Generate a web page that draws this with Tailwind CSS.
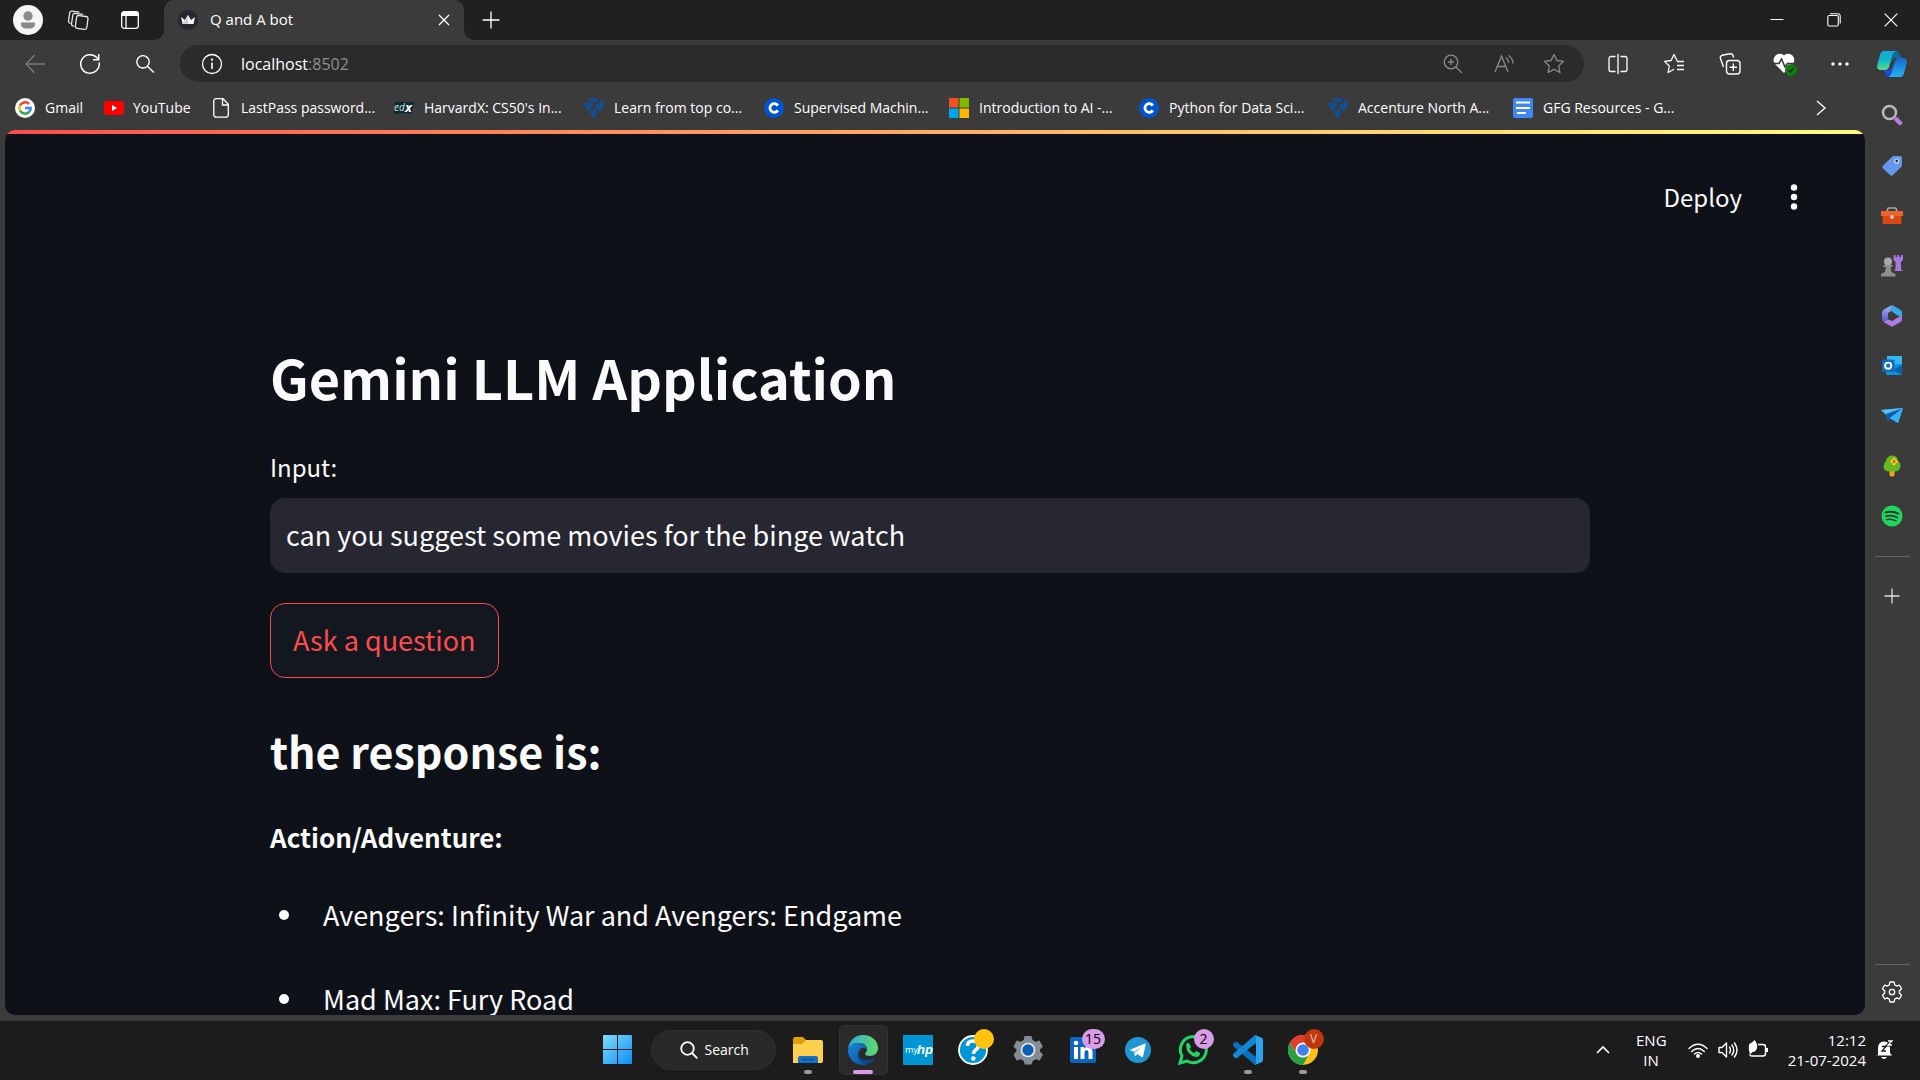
<!DOCTYPE html>
<html lang="en">
<head>
<meta charset="utf-8">
<title>Q and A bot</title>
<script src="https://cdn.jsdelivr.net/npm/@tailwindcss/browser@4"></script>
</head>
<body class="flex h-screen flex-col overflow-hidden bg-[#3b3b3b] font-['Open_Sans','Noto_Sans',sans-serif] text-sm text-white">

<!-- Shared symbols -->
<svg class="hidden" aria-hidden="true">
  <symbol id="coursera" viewBox="0 0 20 20"><circle cx="10" cy="10" r="10" fill="#0056d2"/><path d="M13.8 7.6A4.3 4.3 0 1 0 13.8 12.4" fill="none" stroke="#fff" stroke-width="2.8"/></symbol>
  <symbol id="forage" viewBox="0 0 20 20"><path d="M4 0h12l-3 3.500-5 1zM0 5l7-1 2.500 3-4 5-4-1zM11.500 6.500 20 2l.3 5-4.300 6-4.500-2.500zM5.500 13.500l3.500-3 4.500 3-2 6.500H9z" fill="#144e90"/></symbol>
</svg>

<!-- Tab strip -->
<header class="flex h-10 shrink-0 items-stretch bg-[#202020]">
  <div class="flex w-[154px] shrink-0 items-center">
    <button class="flex w-[56px] justify-center" aria-label="Profile">
      <svg class="size-[30px]" viewBox="0 0 30 30"><circle cx="15" cy="15" r="15" fill="#f5f5f5"/><circle cx="15" cy="11" r="4.7" fill="#8a8a8a"/><path d="M8 17.500h14v1.500a5 5 0 0 1-5 4.500h-4a5 5 0 0 1-5-4.500z" fill="#8a8a8a"/></svg>
    </button>
    <button class="flex w-[44px] justify-center" aria-label="Workspaces">
      <svg class="size-[22px]" viewBox="0 0 22 22" fill="none" stroke="#e8e8e8" stroke-width="1.300" stroke-linejoin="round"><rect x="9" y="7" width="11.500" height="13" rx="2.200" transform="rotate(8 15 13)"/><path d="M7 17.500 5.800 17a2 2 0 0 1-1.300-2L5.800 6a2 2 0 0 1 2.200-1.700l8 1.100M3.500 14.500l-1.200-.8a2 2 0 0 1-.8-2L2.700 4A2 2 0 0 1 5 2.200l7.500 1"/></svg>
    </button>
    <button class="flex w-[54px] justify-center pl-[6px]" aria-label="Tab actions">
      <svg class="size-5" viewBox="0 0 20 20"><rect x="1.700" y="1.700" width="16.600" height="16.600" rx="2.500" fill="none" stroke="#fff" stroke-width="1.300"/><path d="M1.500 3.500a2 2 0 0 1 2-2h13a2 2 0 0 1 2 2V6h-17z" fill="#fff"/><path d="M6 6v12" stroke="#fff" stroke-width="1.300"/></svg>
    </button>
  </div>
  <div class="w-[10px] shrink-0 bg-[#3b3b3b]"><div class="h-full rounded-br-[10px] bg-[#202020]"></div></div>
  <div class="flex w-[300px] items-center rounded-t-[10px] bg-[#3b3b3b] pr-[10px] pl-[14px]">
    <svg class="size-5 shrink-0" viewBox="0 0 20 20"><circle cx="10" cy="10" r="10" fill="#262730"/><path d="M3 7l4 3 3-5 3 5 4-3-1.500 7h-11z" fill="#f4f4f4"/><path d="M4.500 14 10 5v9z" fill="#cfcfcf"/></svg>
    <span class="ml-3 flex-1 text-[15px]">Q and A bot</span>
    <button class="flex size-5 items-center justify-center" aria-label="Close tab">
      <svg class="size-3" viewBox="0 0 12 12" stroke="#fff" stroke-width="1.300"><path d="M1 1l10 10M11 1 1 11"/></svg>
    </button>
  </div>
  <div class="flex-1 bg-[#3b3b3b]"><div class="flex h-full items-center justify-between rounded-bl-[10px] bg-[#202020]">
    <button class="flex w-[54px] justify-center" aria-label="New tab">
      <svg class="size-[18px]" viewBox="0 0 18 18" stroke="#fff" stroke-width="1.300"><path d="M9 .5v17M.5 9h17"/></svg>
    </button>
    <div class="flex">
      <button class="flex h-10 w-[57px] items-center justify-center" aria-label="Minimize"><svg class="size-[14px]" viewBox="0 0 14 14" stroke="#fff"><path d="M.5 6.500h13"/></svg></button>
      <button class="flex h-10 w-[57px] items-center justify-center" aria-label="Restore"><svg class="size-[14px]" viewBox="0 0 14 14" fill="none" stroke="#fff" stroke-width="1.100"><rect x=".8" y="2.500" width="10.500" height="10.500" rx="1.500"/><path d="M3 .8h8a2.200 2.200 0 0 1 2.200 2.200v7.500"/></svg></button>
      <button class="flex h-10 w-[58px] items-center justify-center" aria-label="Close"><svg class="size-[14px]" viewBox="0 0 14 14" stroke="#fff" stroke-width="1.200"><path d="M.7.7l12.600 12.600M13.300.7.7 13.300"/></svg></button>
    </div>
  </div></div>
</header>

<div class="flex min-h-0 flex-1">
  <div class="flex min-w-0 flex-1 flex-col">
    <!-- Address bar -->
    <div class="flex h-[47px] shrink-0 items-center pl-[7px]">
      <button class="flex w-[55px] justify-center" aria-label="Back"><svg class="size-5" viewBox="0 0 20 20" fill="none" stroke="#7c7c7c" stroke-width="1.300"><path d="M20 10H1M9.500 1.300 1 10l8.500 8.700"/></svg></button>
      <button class="flex w-[55px] justify-center" aria-label="Refresh"><svg class="size-[22px]" viewBox="0 0 22 22" fill="none" stroke="#fff" stroke-width="1.500"><path d="M20.200 9.500A9.300 9.300 0 1 1 17.800 4.600L19.500 6.500M19.700 1v5.700h-5.700"/></svg></button>
      <button class="flex w-[55px] justify-center" aria-label="Search"><svg class="size-5" viewBox="0 0 20 20" fill="none" stroke="#fff" stroke-width="1.400"><circle cx="8" cy="7.800" r="6.200"/><path d="m12.500 12.300 6.300 6.300"/></svg></button>
      <div class="ml-2 flex h-[37px] min-w-0 flex-1 items-center rounded-full bg-[#2b2b2b] pr-[5px] pl-[21px]">
        <svg class="size-[22px] shrink-0" viewBox="0 0 22 22" fill="none" stroke="#fff" stroke-width="1.300"><circle cx="11" cy="11" r="9.500"/><path d="M11 9.500V16" stroke-width="1.600"/><circle cx="11" cy="6.700" r=".5"/></svg>
        <div class="ml-[18px] flex-1 text-base">localhost<span class="text-[#8f8f8f]">:8502</span></div>
        <button class="flex w-[51px] justify-center" aria-label="Zoom"><svg class="size-5" viewBox="0 0 20 20" fill="none" stroke="#8b8b8b" stroke-width="1.300"><circle cx="8" cy="8" r="6.800"/><path d="m13 13 6 6M8 5v6M5 8h6"/></svg></button>
        <button class="flex w-[51px] justify-center" aria-label="Read aloud"><svg class="size-5" viewBox="0 0 20 20" fill="none" stroke="#8b8b8b" stroke-width="1.300"><path d="M1 18 7.500 2 14 18M3.500 12.500h8M11.500 3.500q3 1.500 3 5.500M14.500 1.500q4 2.500 4.500 8"/></svg></button>
        <button class="flex w-[50px] justify-center" aria-label="Favorite"><svg class="size-[22px]" viewBox="0 0 22 22" fill="none" stroke="#8b8b8b" stroke-width="1.300" stroke-linejoin="round"><path d="m11 1.500 2.900 6 6.600.9-4.800 4.600 1.200 6.500-5.900-3.100-5.900 3.100 1.200-6.500L1.500 8.400l6.600-.9z"/></svg></button>
      </div>
      <div class="ml-[6px] flex items-center">
        <button class="flex w-[56px] justify-center" aria-label="Split screen"><svg class="size-5" viewBox="0 0 20 20" fill="none" stroke="#fff" stroke-width="1.300"><path d="M7.500 2.500H3a2 2 0 0 0-2 2v11a2 2 0 0 0 2 2h4.500M12.500 2.500H17a2 2 0 0 1 2 2v11a2 2 0 0 1-2 2h-4.500M10 0v20"/></svg></button>
        <button class="flex w-[56px] justify-center" aria-label="Favorites"><svg class="size-[22px]" viewBox="0 0 22 22" fill="none" stroke="#fff" stroke-width="1.300" stroke-linejoin="round"><path d="M20.500 8.500h-6L11 1.500 8.100 7.500 1.500 8.400l4.800 4.600-1.200 6.500 6-3.200M14 8.500h7M14 12.500h7M14 16.500h7"/></svg></button>
        <button class="flex w-[55px] justify-center" aria-label="Collections"><svg class="size-[22px]" viewBox="0 0 22 22" fill="none" stroke="#fff" stroke-width="1.400"><rect x="7.500" y="7.500" width="13.500" height="13.500" rx="3"/><path d="M14.300 10.500v7.500M10.500 14.300H18M4.500 14 1.500 5.500A2.500 2.500 0 0 1 3 2.300L11 .8a2.500 2.500 0 0 1 3 1.700l.6 2"/></svg></button>
        <button class="flex w-[56px] justify-center" aria-label="Browser essentials"><svg class="size-6" viewBox="0 0 24 24"><path d="M11 21 2.500 12.500A6 6 0 0 1 1 6a6 6 0 0 1 10-2.500A6 6 0 0 1 21 6a6 6 0 0 1-1.500 6z" fill="#fff"/><path d="M0 11.500h6l2.500-4.500 3.500 8 2.500-3.500H22" fill="none" stroke="#3b3b3b" stroke-width="1.600"/><circle cx="18" cy="18" r="6" fill="#107c10"/><path d="m15.500 18 2 2 3-4" fill="none" stroke="#062f06" stroke-width="1.300"/></svg></button>
        <button class="flex w-[52px] justify-center" aria-label="More"><svg class="size-5" viewBox="0 0 20 20" fill="#fff"><circle cx="4" cy="10" r="1.700"/><circle cx="11" cy="10" r="1.700"/><circle cx="18" cy="10" r="1.700"/></svg></button>
      </div>
    </div>

    <!-- Bookmarks -->
    <nav class="flex h-[43px] shrink-0 items-center pb-[2px] pl-[15px] text-sm whitespace-nowrap">
      <a href="#" class="flex w-[89px] items-center gap-[10px]"><svg class="size-5 shrink-0" viewBox="0 0 20 20" fill="none" stroke-width="2.500"><circle cx="10" cy="10" r="10" fill="#fff"/><path d="M5 7.300A5.700 5.700 0 0 1 14 6" stroke="#ea4335"/><path d="M5 12.700a5.700 5.700 0 0 1 0-5.400" stroke="#fbbc05"/><path d="M14 14a5.700 5.700 0 0 1-9-1.300" stroke="#34a853"/><path d="M10 10h5.700a5.700 5.700 0 0 1-1.900 4.200" stroke="#4285f4"/></svg>Gmail</a>
      <a href="#" class="flex w-[108px] items-center gap-[9px]"><svg class="size-5 shrink-0" viewBox="0 0 20 20"><rect y="3" width="20" height="14" rx="3" fill="#f00"/><path d="M8 7v6l5-3z" fill="#fff"/></svg>YouTube</a>
      <a href="#" class="flex w-[182px] items-center gap-[9px]"><svg class="size-5 shrink-0" viewBox="0 0 20 20" fill="none" stroke="#fff" stroke-width="1.300"><path d="M4 .7h7l5.300 5.600V17a2.200 2.200 0 0 1-2.200 2.200H4A2.200 2.200 0 0 1 1.800 17V3A2.200 2.200 0 0 1 4 .7zM10.500 1v6H16"/></svg>LastPass password...</a>
      <a href="#" class="flex w-[190px] items-center gap-[10px]"><svg class="size-5 shrink-0" viewBox="0 0 20 20"><path d="M1 4h19l-2 12-8-1-10 1z" fill="#082a2f"/><text x="0" y="12.500" font-family="Open Sans" font-size="10" font-style="italic" fill="#d9e2e3">ed</text><text x="11" y="14" font-family="Open Sans" font-size="13" font-weight="700" font-style="italic" fill="#fff">x</text></svg>HarvardX: CS50's In...</a>
      <a href="#" class="flex w-[180px] items-center gap-[10px]"><svg class="size-5 shrink-0"><use href="#forage"/></svg>Learn from top co...</a>
      <a href="#" class="flex w-[185px] items-center gap-[10px]"><svg class="size-5 shrink-0"><use href="#coursera"/></svg>Supervised Machin...</a>
      <a href="#" class="flex w-[190px] items-center gap-[10px]"><svg class="size-5 shrink-0" viewBox="0 0 20 20"><path fill="#f25022" d="M0 0h9.500v9.500H0z"/><path fill="#7fba00" d="M10.500 0H20v9.500h-9.500z"/><path fill="#00a4ef" d="M0 10.500h9.500V20H0z"/><path fill="#ffb900" d="M10.500 10.500H20V20h-9.500z"/></svg>Introduction to AI -...</a>
      <a href="#" class="flex w-[189px] items-center gap-[10px]"><svg class="size-5 shrink-0"><use href="#coursera"/></svg>Python for Data Sci...</a>
      <a href="#" class="flex w-[185px] items-center gap-[10px]"><svg class="size-5 shrink-0"><use href="#forage"/></svg>Accenture North A...</a>
      <a href="#" class="flex items-center gap-[10px]"><svg class="size-5 shrink-0" viewBox="0 0 20 20"><rect width="20" height="20" rx="2" fill="#4285f4"/><path d="M3 4.500h14M3 10h14M4 15h9" stroke="#fff" stroke-width="2"/></svg>GFG Resources - G...</a>
      <button class="mr-[38px] ml-auto" aria-label="More bookmarks"><svg class="h-4 w-3" viewBox="0 0 12 16" fill="none" stroke="#fff" stroke-width="1.300"><path d="m2 1 8 7-8 7"/></svg></button>
    </nav>

    <!-- Page -->
    <main class="mb-[6px] ml-[5px] min-h-0 flex-1 overflow-hidden rounded-[10px] bg-[#0e1117] font-['Noto_Sans_CJK_SC',sans-serif] text-[27px] text-[#fafafa]">
      <div class="h-1 bg-linear-to-r from-[#ff4b4b] to-[#fffd80]"></div>
      <div class="flex h-[126px] items-center justify-end pr-[65px]">
        <button class="text-2xl">Deploy</button>
        <button class="ml-[46px]" aria-label="Menu"><svg class="h-7 w-3" viewBox="0 0 12 28" fill="#fafafa"><circle cx="6" cy="4.500" r="3.200"/><circle cx="6" cy="14" r="3.200"/><circle cx="6" cy="23.500" r="3.200"/></svg></button>
      </div>
      <div class="pt-[83px] pr-[10px]">
        <div class="mx-auto flex w-full max-w-[1320px] flex-col items-start">
          <h1 class="text-[54px] leading-[68px] font-bold">Gemini LLM Application</h1>
          <label for="question" class="mt-9 text-2xl leading-10">Input:</label>
          <input id="question" type="text" value="can you suggest some movies for the binge watch" class="mt-[11px] h-[75px] w-full rounded-[15px] bg-[#262730] px-4 pb-[3px]">
          <button class="mt-[30px] h-[75px] rounded-[15px] border border-[#ff4b4b] bg-[#131720] px-[22px] text-[#ff4b4b]">Ask a question</button>
          <h2 class="mt-11 text-[43px] leading-[56px] font-bold">the response is:</h2>
          <p class="mt-[35px] text-[26px] leading-[48px] font-bold">Action/Adventure:</p>
          <ul class="mt-[30px] flex flex-col gap-9 leading-[48px]">
            <li class="flex items-center"><span class="mr-[34px] ml-[9px] size-[10px] rounded-full bg-[#fafafa]"></span>Avengers: Infinity War and Avengers: Endgame</li>
            <li class="flex items-center"><span class="mr-[34px] ml-[9px] size-[10px] rounded-full bg-[#fafafa]"></span>Mad Max: Fury Road</li>
          </ul>
        </div>
      </div>
    </main>
  </div>

  <!-- Browser sidebar -->
  <aside class="flex w-[55px] shrink-0 flex-col items-center pr-[1px]">
    <button class="flex h-12 items-center" aria-label="Copilot"><svg class="size-[30px]" viewBox="0 0 30 30"><defs><linearGradient id="c1" x2="0" y2="1"><stop stop-color="#16a6e0"/><stop offset=".5" stop-color="#12b8c4"/><stop offset="1" stop-color="#5cdb8b"/></linearGradient><linearGradient id="c2" x2="0" y2="1"><stop stop-color="#1667c9"/><stop offset="1" stop-color="#22b5f5"/></linearGradient></defs><path d="M17 2h3q2 0 3 4l1 3h-7l-3 6z" fill="#0b6b9e"/><path d="M13 28H11q-2 0-3-4l-1-3h6l4-6z" fill="#1d49d8"/><path d="M7 2h12q-3 1-4 6l-3 10q-1 3-4 3H4q-5 0-3.500-6L3 6q1-4 4-4z" fill="url(#c1)"/><path d="M23 28H11q3-1 4-6l3-10q1-3 4-3h4q5 0 3.500 6L27 24q-1 4-4 4z" fill="url(#c2)"/></svg></button>
    <button class="mt-[1px] flex h-[51px] items-center" aria-label="Search"><svg class="size-[22px]" viewBox="0 0 22 22" fill="none"><circle cx="8.500" cy="8.500" r="6.500" stroke="#b9b9b9" stroke-width="2.500"/><path d="m15.500 15.500 3.500 3.500" stroke="#b57edc" stroke-width="4.500" stroke-linecap="round"/></svg></button>
    <button class="flex h-[51px] items-center" aria-label="Shopping"><svg class="size-[22px]" viewBox="0 0 22 22"><path d="M12 1h7q2 0 2 2v8L12 20q-1.500 1.500-3 0L2 13.500q-1.500-1.500 0-3z" fill="#6596e8"/><circle cx="15.700" cy="6" r="2" fill="#333" stroke="#d7e5ff" stroke-width="1.200"/></svg></button>
    <button class="flex h-[50px] items-center" aria-label="Tools"><svg class="size-[22px]" viewBox="0 0 22 22"><path d="M6.500 6V4.500Q6.500 3 8 3h6q1.500 0 1.500 1.500V6" fill="none" stroke="#aaa" stroke-width="1.600"/><path d="M1.500 9h19v9q0 1-1 1h-17q-1 0-1-1z" fill="#d9480f"/><path d="M0 6h22v5H0z" fill="#f0642b"/><circle cx="11" cy="12" r="2" fill="#c8c8c8"/></svg></button>
    <button class="flex h-[50px] items-center" aria-label="Games"><svg class="size-[22px]" viewBox="0 0 22 22"><path d="M12.500 0h2v2h1.700V0h2v2H20V0h2v5l-2 2v7l2 2h-9l1.500-2V7l-2-2z" fill="#a977dc"/><circle cx="7" cy="6.500" r="4" fill="#a8a8a8"/><path d="M2.500 10h9v2h-2l1 5 4 2v2.500H0V19l4-2 1-5H2.500z" fill="#8e8e8e"/></svg></button>
    <button class="flex h-[50px] items-center" aria-label="Microsoft 365"><svg class="size-[22px]" viewBox="0 0 22 22"><defs><linearGradient id="m1" x2="0" y2="1"><stop stop-color="#a9b6f5"/><stop offset="1" stop-color="#5a55c8"/></linearGradient></defs><path d="M10 .5 3 4.500Q1 5.500 1 8v6q0 2 1.500 3L7 14.500V8l6-3.500z" fill="url(#m1)"/><path d="M10 .5q1-.5 2 0L19 4.500q2 1 2 3.500v5l-6-3.500L9 5z" fill="#3aa7e8"/><path d="M21 11v3q0 2.200-2 3.300l-7 4q-1 .6-2 0L2.500 17l4.500-2.500 4 1.500 5-3z" fill="#b07be0"/></svg></button>
    <button class="flex h-[50px] items-center" aria-label="Outlook"><svg class="size-[22px]" viewBox="0 0 22 22"><path d="M6 1h15v11H6z" fill="#35b8f1"/><path d="M5 9h16v11H5z" fill="#1490df"/><path d="m21 10-9 5 9 5z" fill="#0a62ad"/><rect x="1" y="4.500" width="12.500" height="12.500" rx="1.500" fill="#0f6cbd"/><circle cx="7.200" cy="10.700" r="3.100" fill="none" stroke="#fff" stroke-width="1.900"/></svg></button>
    <button class="flex h-[50px] items-center" aria-label="Drop"><svg class="size-[22px]" viewBox="0 0 22 22"><path d="M0 5 22 3 17 18 8 13z" fill="#2f9de8"/><path d="M0 5 22 3 7 11z" fill="#55c1fa"/><path d="M5 9 22 3 9 13l-2 5z" fill="#0c5ea8"/><path d="M22 3 9 13l8 5z" fill="#39b2f5"/></svg></button>
    <button class="flex h-[50px] items-center" aria-label="E-tree"><svg class="size-[22px]" viewBox="0 0 22 22"><path d="M8.500 14h5v6q0 1.500-2.500 1.500T8.500 20z" fill="#f0a51c"/><path d="M11 .5q5 0 6 5 3 3 2.500 6-1 5-6 5H8q-5 0-5.500-5Q2.500 8 5 6q1-5.500 6-5.500z" fill="#64b91e"/><path d="M13 3v7M9.500 6.500h7" stroke="#ffc42e" stroke-width="3"/><circle cx="13" cy="6.500" r="1.400" fill="#e0561c"/></svg></button>
    <button class="flex h-[50px] items-center" aria-label="Spotify"><svg class="size-[22px]" viewBox="0 0 22 22" fill="none" stroke="#2b3a2f" stroke-linecap="round"><circle cx="11" cy="11" r="10.500" fill="#1ed760" stroke="none"/><path d="M4.500 7.500q7-2 13 1.300" stroke-width="2"/><path d="M5 11.200q6-1.600 11.300 1.300" stroke-width="1.700"/><path d="M5.500 14.600q5-1.200 9.500 1.200" stroke-width="1.400"/></svg></button>
    <hr class="mt-[15px] w-[35px] border-[#666]">
    <button class="mt-[31px]" aria-label="Add"><svg class="size-4" viewBox="0 0 16 16" stroke="#ddd" stroke-width="1.300"><path d="M8 .5v15M.5 8h15"/></svg></button>
    <hr class="mt-auto w-[35px] border-[#666]">
    <button class="mt-4 mb-[18px]" aria-label="Settings"><svg class="size-[22px]" viewBox="0 0 22 22" fill="none" stroke="#fff" stroke-width="1.300" stroke-linejoin="round"><path d="M9 1h4l.8 3 1.700 1 3-.8 2 3.500L18.300 10v2l2.200 2.300-2 3.500-3-.8-1.700 1-.8 3H9l-.8-3-1.700-1-3 .8-2-3.500L3.700 12v-2L1.500 7.700l2-3.500 3 .8 1.700-1z"/><circle cx="11" cy="11" r="2.700"/></svg></button>
  </aside>
</div>

<!-- Taskbar -->
<footer class="grid h-[59px] shrink-0 grid-cols-[1fr_auto_1fr] items-center bg-[#1c1c1c] pb-[2px]">
  <div></div>
  <div class="flex items-center">
    <button class="flex w-[55px] justify-center" aria-label="Start"><svg class="size-[29px]" viewBox="0 0 29 29"><defs><linearGradient id="w" x2="1" y2="1"><stop stop-color="#7fdcff"/><stop offset="1" stop-color="#0a8ff5"/></linearGradient></defs><path d="M0 1q0-1 1-1h13v14H0zM15 0h13q1 0 1 1v13H15zM0 15h14v14H1q-1 0-1-1zM15 15h14v13q0 1-1 1H15z" fill="url(#w)"/></svg></button>
    <button class="mr-[5px] ml-[6px] flex h-10 w-[125px] items-center rounded-full border border-[#303030] bg-[#292929] pl-7 text-sm"><svg class="mr-[7px] size-[18px]" viewBox="0 0 18 18" fill="none" stroke="#fff" stroke-width="1.800"><circle cx="7.500" cy="7.500" r="6.300"/><path d="m12 12 5.300 5.300"/></svg>Search</button>
    <button class="relative flex h-[50px] w-[55px] items-center justify-center" aria-label="File Explorer"><svg class="size-[30px]" viewBox="0 0 30 30"><path d="M0 4q0-2 2-2h8l3 3v5H0z" fill="#e0a008"/><path d="M0 9h9l4-4h15q2 0 2 2v19q0 2-2 2H0z" fill="#ffd04e"/><path d="M5 28v-5q0-2 2-2h16q2 0 2 2v5z" fill="#1272c4"/><path d="M9 24.500h12" stroke="#0a4c8b" stroke-width="1.300"/></svg><span class="absolute bottom-[1px] h-1 w-2 rounded-full bg-[#9a9a9a]"></span></button>
    <button class="relative mx-[3px] flex h-[50px] w-[49px] items-center justify-center rounded-md border border-[#333] bg-[#2a2a2a]" aria-label="Edge"><svg class="size-[30px]" viewBox="0 0 30 30"><defs><linearGradient id="e" x2="1"><stop stop-color="#2fa9e8"/><stop offset="1" stop-color="#62db62"/></linearGradient><linearGradient id="e2" x2="1" y2="1"><stop stop-color="#1b88d8"/><stop offset="1" stop-color="#0c4f9c"/></linearGradient></defs><path d="M0 14C1 6 7 0 15 0c9 0 15 6 15 13 0 5-4 8-8 8-3 0-5-1-5-2 1-2 2-3 2-5 0-3-3-6-8-6C6 8 2 10 0 14z" fill="url(#e)"/><path d="M0 15c1-4 5-7 10-7 6 0 9 4 9 7-2-3-6-3-8 1-2 5 1 11 8 13-1 1-3 1-4 1C6 30 0 23 0 15z" fill="url(#e2)"/><path d="M10 18c0 5 6 8 11 7 3 0 5-1 7-3-3 5-6 7-9 7-6 0-10-5-9-11z" fill="#0b478e"/></svg><span class="absolute bottom-0 h-1 w-5 rounded-full bg-[#d99ae6]"></span></button>
    <button class="flex w-[55px] justify-center" aria-label="myHP"><svg class="size-[30px]" viewBox="0 0 30 30"><rect width="30" height="30" rx="1" fill="#0096d6"/><text x="2" y="18" font-family="Open Sans" font-size="9" fill="#fff">my</text><text x="14" y="19" font-family="Liberation Sans" font-size="13" font-style="italic" font-weight="700" fill="#fff">hp</text></svg></button>
    <button class="relative flex w-[55px] justify-center" aria-label="HP Support"><svg class="size-[30px]" viewBox="0 0 30 30"><circle cx="15" cy="15" r="14" fill="#0096d6" stroke="#fff" stroke-width="1.800"/><path d="M9.500 11q0-5 5.500-5t5.500 4.500q0 2.500-3 4.500-2 1.500-2 4" fill="none" stroke="#fff" stroke-width="3.500"/><circle cx="15.300" cy="23.500" r="2.300" fill="#fff"/></svg><span class="absolute -top-[6px] left-[28px] size-5 rounded-full bg-[#ffc20e]"></span></button>
    <button class="flex w-[55px] justify-center" aria-label="Settings"><svg class="size-[30px]" viewBox="0 0 30 30"><path d="M11.500 1h7l1 4 3 1.700 4-1.200 3.300 6L27 14.500v2l3 3-3.300 6-4-1.200-3 1.700-1 3.500h-7l-1-3.500-3-1.700-4 1.200-3.300-6 3-3v-2l-3-3 3.300-6 4 1.200 3-1.700z" fill="#848c94"/><circle cx="15" cy="15" r="7.300" fill="#e9edf0"/><circle cx="15" cy="15" r="5.700" fill="#0f5fb0"/></svg></button>
    <button class="relative flex w-[55px] justify-center" aria-label="LinkedIn"><svg class="size-[30px]" viewBox="0 0 30 30"><rect x="2" y="2" width="26" height="26" rx="2" fill="#0a66c2"/><circle cx="8" cy="8" r="2.300" fill="#fff"/><path d="M6 12h4v12H6zM12.500 12h3.800v1.700q1.200-2 3.700-2 4.500 0 4.500 5.300v7h-4v-6.500q0-2.500-1.900-2.500-2.100 0-2.100 2.500V24h-4z" fill="#fff"/></svg><span class="absolute -top-[6px] left-[26px] flex h-5 w-[23px] items-center justify-center rounded-full bg-[#d99ae6] text-sm text-black">15</span></button>
    <button class="flex w-[55px] justify-center" aria-label="Telegram"><svg class="size-[30px]" viewBox="0 0 30 30"><circle cx="15" cy="15" r="13" fill="#1f95d4"/><path d="M6.500 15 22 8.500q1-.3.700 1L20 21.500q-.4 1-1.400.4l-4-3-2 2q-.6.500-.8-.4l-1-4z" fill="#fff"/><path d="m11 16.500 8-5-6.500 6.200-.5 3z" fill="#9cc4dc"/></svg></button>
    <button class="relative flex w-[55px] justify-center" aria-label="WhatsApp"><svg class="size-[30px]" viewBox="0 0 30 30"><path d="m2 28 2-7a13 13 0 1 1 5 5z" fill="none" stroke="#25d366" stroke-width="3"/><path d="M8 10q1-3 3-2l2 4-1.500 2q2 3 5 4l1.500-2 4 2q0 4-4 4Q8.500 20 8 10z" fill="#25d366"/></svg><span class="absolute -top-[6px] left-[28px] flex size-5 items-center justify-center rounded-full bg-[#d99ae6] text-sm text-black">2</span></button>
    <button class="relative flex h-[50px] w-[55px] items-center justify-center" aria-label="Visual Studio Code"><svg class="size-[30px]" viewBox="0 0 30 30"><path d="m0 9 2-2q1-.5 2 0l19 15v8h-1L0 11z" fill="#0a72bd"/><path d="m0 21 2 2q1 .5 2 0L23 8V0h-1L0 19z" fill="#1088d4"/><path d="m22 0 7 3q1 .5 1 2v20q0 1.500-1 2l-7 3q1-.5 1-2V2q0-1.500-1-2z" fill="#2ba3f0"/></svg><span class="absolute bottom-[1px] h-1 w-2 rounded-full bg-[#9a9a9a]"></span></button>
    <button class="relative flex h-[50px] w-[55px] items-center justify-center" aria-label="Chrome"><svg class="size-[30px]" viewBox="0 0 30 30"><circle cx="15" cy="15" r="15" fill="#fbc116"/><path d="M2 7.500A15 15 0 0 1 28 7.500H15L8.500 19z" fill="#e33b2e"/><path d="M2 7.500 8.500 19q2 3.500 6.500 3.500L21 19 15 30A15 15 0 0 1 2 7.500z" fill="#2a9d48"/><circle cx="15" cy="15" r="7.500" fill="#fff"/><circle cx="15" cy="15" r="5.800" fill="#3f7ff0"/></svg><span class="absolute top-1 left-[28px] flex size-5 items-center justify-center rounded-full bg-[#bf360c] text-xs text-[#e9c6b9]">V</span><span class="absolute bottom-[1px] h-1 w-2 rounded-full bg-[#9a9a9a]"></span></button>
  </div>
  <div class="flex items-center justify-end pr-[25px] text-[15px] leading-5">
    <button aria-label="Hidden icons"><svg class="h-[9px] w-[14px]" viewBox="0 0 14 9" fill="none" stroke="#fff" stroke-width="1.700"><path d="m1 8 6-6 6 6"/></svg></button>
    <div class="ml-[26px] w-[30px] text-center">ENG<br>IN</div>
    <div class="ml-[22px] flex items-center gap-[10px]">
      <svg class="size-5" viewBox="0 0 20 20" fill="none" stroke="#fff" stroke-width="1.400" stroke-linecap="round"><path d="M1 8.500q9-8.500 18 0M3.700 11.500q6.300-6 12.600 0M6.500 14q3.500-3 7 0"/><circle cx="10" cy="16" r="1.300" fill="#fff"/></svg>
      <svg class="size-5" viewBox="0 0 20 20" fill="none" stroke="#fff" stroke-width="1.400" stroke-linejoin="round" stroke-linecap="round"><path d="M1 7.500h3L8.500 3v14L4 12.500H1zM11.500 7q2 3 0 6M14 5q3.500 5 0 10M16.500 3q5 7 0 14"/></svg>
      <svg class="size-5" viewBox="0 0 20 20"><path d="M10 4.500h5q2.500 0 2.500 2.500v6.500q0 2.500-2.500 2.500H4q-2 0-2.500-1.500" fill="none" stroke="#fff" stroke-width="1.400"/><path d="M18 8h2v4h-2z" fill="#fff"/><path d="M6.500 0q3.500 4 2.500 8-1 4-4.500 4l-2.500 2.500Q.5 9 .8 6q.3-3 3.200-3.500z" fill="#fff"/></svg>
    </div>
    <div class="ml-[14px] w-[84px] text-right whitespace-nowrap">12:12<br>21-07-2024</div>
    <svg class="ml-[9px] size-5" viewBox="0 0 20 20"><path d="M3 15V8q0-6 6-6.500 6 0 6 6.500v5l2 2.500H1zM6 17h6q-3 4-6 0z" fill="#fff"/><path d="M13 1h4l-4 4h4" fill="none" stroke="#1c1c1c" stroke-width="3"/><path d="M13 1h4l-4 4h4" fill="none" stroke="#fff" stroke-width="1.300"/><path d="M7 6.500h4l-4 4.500h4" fill="none" stroke="#1c1c1c" stroke-width="1.300"/></svg>
  </div>
</footer>
</body>
</html>
